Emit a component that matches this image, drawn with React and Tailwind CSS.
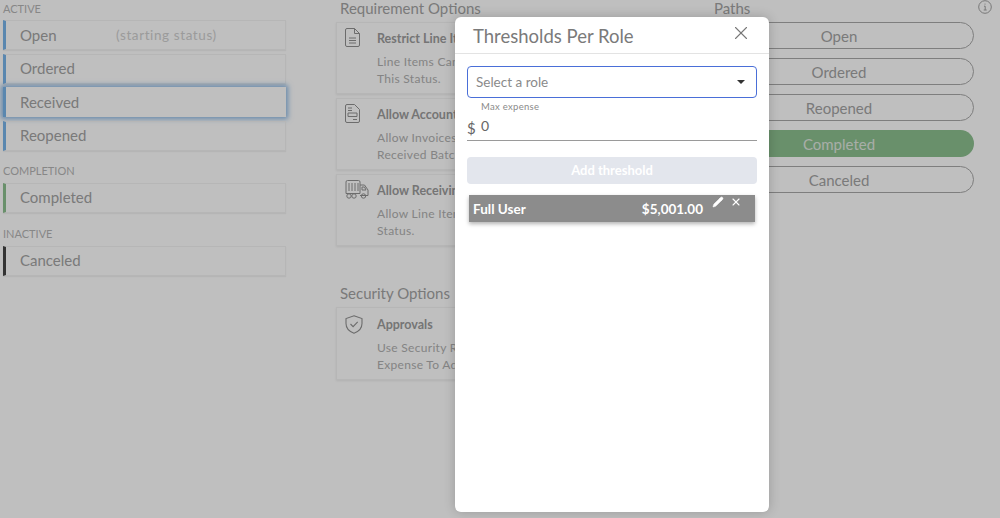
import React from "react";
import { X, Pencil } from "lucide-react";

const font = { fontFamily: '"Lato", "Noto Sans", sans-serif' };

const StatusRow = ({ name, bar, note, focused }) => (
  <div
    className={`flex items-center h-[30px] w-[283px] border-l-[3px] ${bar} ${
      focused
        ? "shadow-[0_0_5px_2px_rgba(100,160,220,0.75)]"
        : "border-y border-r border-y-[#f3f3f3] border-r-[#f3f3f3] shadow-[0_1px_1px_rgba(0,0,0,0.05)]"
    }`}
  >
    <span className="ml-[14px] w-[96px] text-[15px] text-[#a3a3a3]">{name}</span>
    {note && <span className="text-[13.5px] text-[#cfcfcf] tracking-[0.6px]">{note}</span>}
  </div>
);

const GroupLabel = ({ children, className }) => (
  <div className={`text-[11px] leading-[13px] text-[#b5b5b5] ${className}`}>{children}</div>
);

const DocIcon = () => (
  <svg width="15" height="19" viewBox="0 0 15 19" fill="none" stroke="#909090" strokeWidth="1">
    <path d="M2 .5h7.5l5 5V17a1.5 1.5 0 0 1-1.5 1.5H2A1.5 1.5 0 0 1 .5 17V2A1.5 1.5 0 0 1 2 .5z" />
    <path d="M9.5 .5v5h5M4 10h7M4 12.5h7M4 15h7" />
  </svg>
);

const FormIcon = () => (
  <svg width="15" height="19" viewBox="0 0 15 19" fill="none" stroke="#909090" strokeWidth="1">
    <path d="M2 .5h7.5l5 5V17a1.5 1.5 0 0 1-1.5 1.5H2A1.5 1.5 0 0 1 .5 17V2A1.5 1.5 0 0 1 2 .5z" />
    <path d="M3 4h4M3 6.5h4M3 9h9v3.5H3zM8 15.5h4" />
  </svg>
);

const TruckIcon = () => (
  <svg width="24" height="19" viewBox="0 0 24 19" fill="none" stroke="#909090" strokeWidth="1">
    <path d="M1 13.5V2a1.5 1.5 0 0 1 1.5-1.5h11A1.5 1.5 0 0 1 15 2v11.5H1z" />
    <path d="M4 3v8M7 3v8M10 3v8M13 3v8" />
    <path d="M15 5h4.5l3.5 5v5.5h-8" />
    <path d="M17 7h2.5l1.5 3h-4z" />
    <circle cx="4" cy="16" r="2.2" />
    <circle cx="9" cy="16" r="2.2" />
    <circle cx="18.5" cy="16" r="2.2" />
  </svg>
);

const ShieldIcon = () => (
  <svg width="18" height="19" viewBox="0 0 18 19" fill="none" stroke="#909090" strokeWidth="1.1">
    <path d="M9 .8 17 3.6v5c0 4.6-3.3 8-8 9.7-4.7-1.700-8-5.100-8-9.700v-5L9 .8z" />
    <path d="M5.500 9l2.600 2.600 4.600-4.800" />
  </svg>
);

const OptionCard = ({ icon, title, lines, className, roomy }) => (
  <div className={`flex w-[350px] h-[72px] border border-[#f3f3f3] shadow-[0_1px_2px_rgba(0,0,0,0.08)] ${className}`}>
    <div className={`w-[40px] pl-[8px] shrink-0 ${roomy ? "pt-[7px]" : "pt-[5px]"}`}>{icon}</div>
    <div className={`whitespace-nowrap ${roomy ? "pt-[8px]" : "pt-[7px]"}`}>
      <div className="text-[12.5px] leading-[17px] font-bold text-[#9c9c9c]">{title}</div>
      <div className="mt-[6px] text-[12px] leading-[17px] text-[#b0b0b0] tracking-[0.3px]">
        {lines.map((l) => (
          <div key={l}>{l}</div>
        ))}
      </div>
    </div>
  </div>
);

const PathPill = ({ name, active }) => (
  <div
    className={`flex items-center justify-center w-[270px] h-[27px] pt-[1px] rounded-full text-[15px] ${
      active ? "bg-[#8cc08f] text-[#e0e8e0]" : "border border-[#a8a8a8] text-[#a3a3a3]"
    }`}
  >
    {name}
  </div>
);

export default function App() {
  return (
    <div className="relative h-[518px] w-[1000px] overflow-hidden bg-white" style={font}>
      {/* page under the dialog */}
      <div className="flex h-full">
        <div className="w-[336px] shrink-0 pl-[3px] pt-[2px]">
          <GroupLabel>ACTIVE</GroupLabel>
          <div className="mt-[5px] flex flex-col gap-[3.500px]">
            <StatusRow name="Open" bar="border-l-[#79b4ea]" note="(starting status)" />
            <StatusRow name="Ordered" bar="border-l-[#79b4ea]" />
            <StatusRow name="Received" bar="border-l-[#79b4ea]" focused />
            <StatusRow name="Reopened" bar="border-l-[#79b4ea]" />
          </div>
          <GroupLabel className="mt-[13px] mb-[6px]">COMPLETION</GroupLabel>
          <StatusRow name="Completed" bar="border-l-[#8cc08f]" />
          <GroupLabel className="mt-[14px] mb-[6px]">INACTIVE</GroupLabel>
          <StatusRow name="Canceled" bar="border-l-[#444444]" />
        </div>

        <div className="w-[368px] shrink-0">
          <div className="h-[24px] -mt-[2px] pl-[4px] text-[15px] leading-[20px] text-[#a3a3a3]">Requirement Options</div>
          <OptionCard
            icon={<DocIcon />}
            title="Restrict Line Items"
            lines={["Line Items Cannot Be Edited In", "This Status."]}
          />
          <OptionCard
            className="mt-[4px]"
            icon={<FormIcon />}
            title="Allow Accounting"
            lines={["Allow Invoices To Be Added To", "Received Batches."]}
          />
          <OptionCard
            className="mt-[4px]"
            icon={<TruckIcon />}
            title="Allow Receiving"
            lines={["Allow Line Items To Be Received", "Status."]}
          />
          <div className="mt-[37px] h-[24px] pl-[4px] text-[15px] leading-[20px] text-[#a3a3a3]">Security Options</div>
          <OptionCard
            roomy
            className="h-[73px]"
            icon={<ShieldIcon />}
            title="Approvals"
            lines={["Use Security Roles To Limit", "Expense To Add"]}
          />
        </div>

        <div className="w-[270px] shrink-0">
          <div className="h-[24px] -mt-[2px] pl-[10px] text-[15px] leading-[20px] text-[#a3a3a3]">Paths</div>
          <div className="flex flex-col gap-[9px]">
            <PathPill name="Open" />
            <PathPill name="Ordered" />
            <PathPill name="Reopened" />
            <PathPill name="Completed" active />
            <PathPill name="Canceled" />
          </div>
        </div>

        <div className="pl-[4px]">
          <svg width="14" height="14" viewBox="0 0 14 14" fill="none" stroke="#a0a0a0" strokeWidth="1">
            <circle cx="7" cy="7" r="6.300" />
            <path d="M6 6.200h1.200V10M5.700 10h3M7 3.600v1" />
          </svg>
        </div>
      </div>

      {/* overlay + dialog */}
      <div className="absolute inset-0 bg-black/25" />
      <div className="absolute left-[455px] top-[17px] flex h-[495px] w-[314px] flex-col rounded-[6px] bg-white shadow-[0_0_12px_rgba(0,0,0,0.2)]">
        <div className="flex h-[37px] shrink-0 items-center justify-between border-b border-[#e3e3e3] pl-[18px] pr-[17px]">
          <span className="mt-[3px] text-[18.500px] text-[#7a7a7a]">Thresholds Per Role</span>
          <X size={22} strokeWidth={1.200} className="mb-[4px] text-[#777777]" />
        </div>

        <div className="px-[12px] pt-[12px]">
          <div className="flex h-[32px] items-center justify-between rounded-[4px] border border-[#4a6fd8] pl-[8px] pr-[11px]">
            <span className="text-[13.500px] text-[#8a8a8a]">Select a role</span>
            <span className="h-0 w-0 border-x-[4px] border-t-[4px] border-x-transparent border-t-[#333333]" />
          </div>

          <div className="mt-[3px] pl-[14px] text-[9.500px] leading-[12px] text-[#8a8a8a] tracking-[0.3px]">Max expense</div>
          <div className="flex h-[28px] items-center border-b border-[#9a9a9a] pt-[2px]">
            <span className="w-[14px] text-[15px] leading-[20px] text-[#666666]">$</span>
            <span className="mb-[3px] text-[14px] leading-[20px] text-[#666666]">0</span>
          </div>

          <div className="mt-[16px] flex h-[27px] items-center justify-center rounded-[4px] bg-[#e3e6ed] text-[13px] font-bold text-white">
            Add threshold
          </div>

          <div className="mx-[2px] mt-[11px] flex h-[27px] items-center bg-[#8c8c8c] pl-[4px] text-white shadow-[0_2px_4px_rgba(0,0,0,0.3)]">
            <span className="mt-[2px] text-[13.500px] font-bold">Full User</span>
            <span className="ml-auto mt-[2px] text-[13.500px] font-bold">$5,001.00</span>
            <div className="ml-[9px] mr-[13px] flex items-center gap-[6px] self-start pt-[1px]">
              <Pencil size={12} fill="white" strokeWidth={1} />
              <X size={12} strokeWidth={2.200} />
            </div>
          </div>
        </div>
      </div>
    </div>
  );
}
